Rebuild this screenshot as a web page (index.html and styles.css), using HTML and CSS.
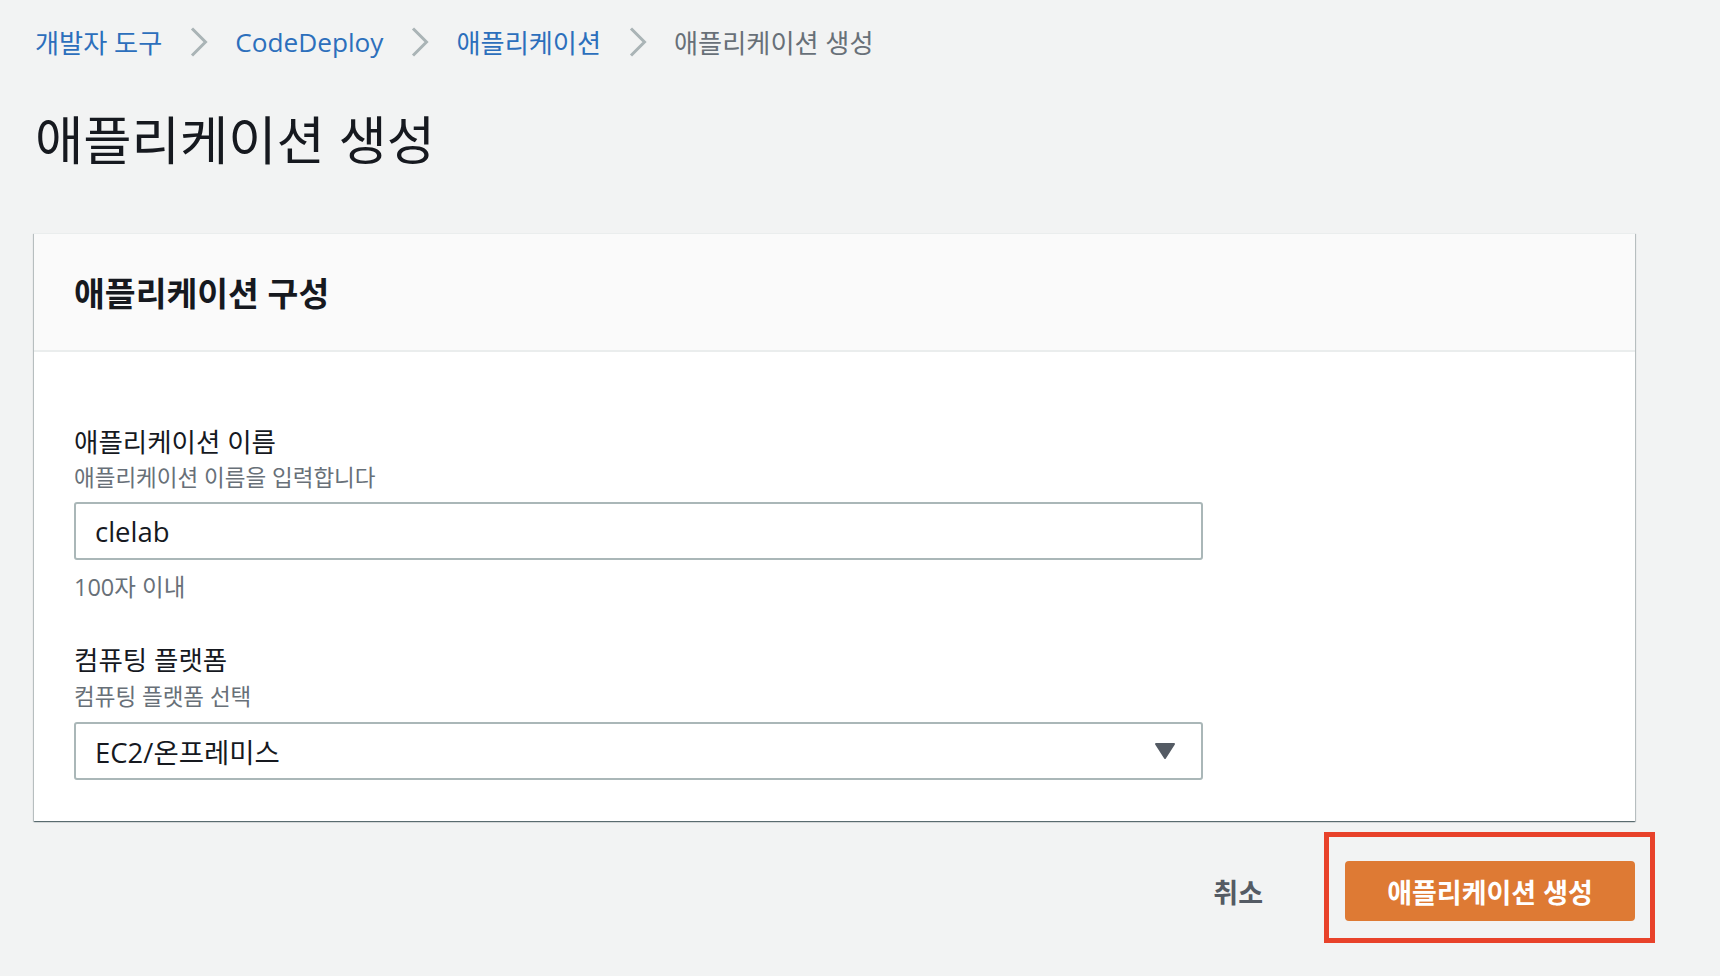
FILE: index.html
```html
<!DOCTYPE html>
<html lang="ko">
<head>
<meta charset="utf-8">
<title>애플리케이션 생성</title>
<link rel="stylesheet" href="styles.css">
</head>
<body>
<div class="page">
  <nav class="breadcrumb">
    <a class="crumb-link" href="#">개발자 도구</a>
    <span class="sep"><svg width="18" height="30" viewBox="0 0 18 30"><polyline points="2,1.5 15.5,15 2,28.5" fill="none" stroke="#aab4b6" stroke-width="3"/></svg></span>
    <a class="crumb-link" href="#">CodeDeploy</a>
    <span class="sep"><svg width="18" height="30" viewBox="0 0 18 30"><polyline points="2,1.5 15.5,15 2,28.5" fill="none" stroke="#aab4b6" stroke-width="3"/></svg></span>
    <a class="crumb-link" href="#">애플리케이션</a>
    <span class="sep"><svg width="18" height="30" viewBox="0 0 18 30"><polyline points="2,1.5 15.5,15 2,28.5" fill="none" stroke="#aab4b6" stroke-width="3"/></svg></span>
    <span class="crumb-current">애플리케이션 생성</span>
  </nav>

  <h1 class="page-title">애플리케이션 생성</h1>

  <section class="card">
    <div class="card-header">
      <h2 class="card-title">애플리케이션 구성</h2>
    </div>
    <div class="card-body">
      <div class="field">
        <div class="field-label">애플리케이션 이름</div>
        <div class="field-desc">애플리케이션 이름을 입력합니다</div>
        <div class="input">clelab</div>
        <div class="field-constraint">100자 이내</div>
      </div>
      <div class="field field-second">
        <div class="field-label">컴퓨팅 플랫폼</div>
        <div class="field-desc">컴퓨팅 플랫폼 선택</div>
        <div class="input select">
          <span>EC2/온프레미스</span>
          <svg class="caret" width="22" height="18" viewBox="0 0 22 18"><polygon points="2,2 20,2 11,16" fill="#545b64" stroke="#545b64" stroke-width="2" stroke-linejoin="round"/></svg>
        </div>
      </div>
    </div>
  </section>

  <div class="actions">
    <button class="btn-cancel" type="button">취소</button>
    <div class="primary-wrap">
      <button class="btn-primary" type="button">애플리케이션 생성</button>
      <span class="highlight"></span>
    </div>
  </div>
</div>
</body>
</html>
```

FILE: styles.css
```css
html, body {
  margin: 0;
  padding: 0;
}
body {
  background: #f2f3f3;
  font-family: "Open Sans", "Noto Sans CJK KR", sans-serif;
  color: #16191f;
  min-height: 976px;
}
.page {
  width: 1601px;
  padding-left: 34px;
  padding-bottom: 60px;
}
.breadcrumb {
  display: flex;
  align-items: center;
  height: 84px;
  padding-left: 1px;
  font-size: 26.2px;
}
.crumb-link {
  color: #2c6fbc;
  text-decoration: none;
}
.crumb-current {
  color: #687078;
}
.sep {
  display: flex;
  align-items: center;
  margin: 0 27px 0 28px;
}
.page-title {
  margin: 25px 0 0 1px;
  font-size: 52.5px;
  line-height: 62px;
  font-weight: 400;
  color: #16191f;
}
.card {
  margin-top: 62px;
  background: #ffffff;
  border-top: 1px solid #eaeded;
  box-shadow: 0 1px 1px 0 rgba(0, 28, 36, 0.45), 1px 1px 1px 0 rgba(0, 28, 36, 0.18), -1px 1px 1px 0 rgba(0, 28, 36, 0.18);
}
.card-header {
  height: 116px;
  display: flex;
  align-items: center;
  padding-left: 40px;
  background: #fafafa;
  border-bottom: 2px solid #eaeded;
}
.card-title {
  margin: 0;
  font-size: 33.5px;
  font-weight: 700;
  line-height: 40px;
  padding-top: 2px;
}
.card-body {
  padding: 74px 40px 41px 40px;
}
.field {
  display: flex;
  flex-direction: column;
}
.field-second {
  margin-top: 43px;
}
.field-label {
  font-size: 26.5px;
  line-height: 32px;
}
.field-desc {
  margin-top: 6px;
  font-size: 22.5px;
  line-height: 28px;
  color: #687078;
}
.field-second .field-desc {
  margin-top: 7px;
}
.input {
  box-sizing: border-box;
  width: 1129px;
  height: 58px;
  margin-top: 10px;
  border: 2px solid #aab7b8;
  border-radius: 3px;
  background: #ffffff;
  padding: 0 25px 0 19px;
  display: flex;
  align-items: center;
  font-size: 27.5px;
  color: #16191f;
}
.field-second .input {
  margin-top: 11px;
}
.select {
  justify-content: space-between;
}
.caret {
  display: block;
}
.field-constraint {
  margin-top: 13px;
  font-size: 23.5px;
  line-height: 28px;
  color: #687078;
}
.actions {
  display: flex;
  justify-content: flex-end;
  align-items: center;
  margin-top: 40px;
}
.btn-cancel {
  border: none;
  background: transparent;
  font-family: inherit;
  font-size: 27px;
  font-weight: 700;
  color: #545b64;
  padding: 0;
  margin-right: 82px;
  cursor: pointer;
}
.primary-wrap {
  position: relative;
}
.btn-primary {
  display: block;
  width: 290px;
  height: 60px;
  border: none;
  border-radius: 4px;
  background: #de7a34;
  color: #ffffff;
  font-family: inherit;
  font-size: 27px;
  font-weight: 700;
  cursor: pointer;
}
.highlight {
  position: absolute;
  top: -29px;
  bottom: -22px;
  left: -21px;
  right: -20px;
  border: 5px solid #e8422a;
  pointer-events: none;
}
```
